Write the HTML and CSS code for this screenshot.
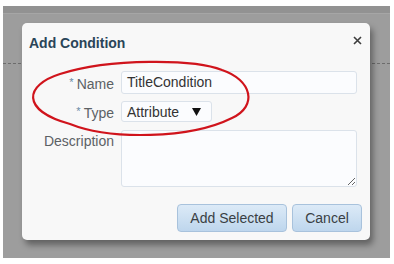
FILE: index.html
```html
<!DOCTYPE html>
<html>
<head>
<meta charset="utf-8">
<link rel="stylesheet" href="styles.css">
</head>
<body>
<div class="page">
  <div class="backdrop">
    <div class="topbar"></div>
    <div class="content"><div class="dashline"></div></div>
    <div class="dialog">
      <div class="dlg-header">
        <div class="dlg-title">Add Condition</div>
        <svg class="close" width="9" height="9" viewBox="0 0 9 9"><path d="M1 1 L8 8 M8 1 L1 8" stroke="#3d3d3d" stroke-width="1.6" fill="none"/></svg>
      </div>
      <div class="form">
        <label class="lbl"><span class="req">*</span>Name</label>
        <div class="input">TitleCondition</div>
        <label class="lbl"><span class="req">*</span>Type</label>
        <div class="select-row">
          <div class="select"><span>Attribute</span><svg width="9" height="8" viewBox="0 0 9 8"><path d="M0 0 H9 L4.5 8 Z" fill="#111"/></svg></div>
        </div>
        <label class="lbl lbl-top">Description</label>
        <textarea class="textarea"></textarea>
      </div>
      <div class="actions">
        <button class="btn btn-add">Add Selected</button>
        <button class="btn btn-cancel">Cancel</button>
      </div>
    </div>
  </div>
  <svg class="annot" width="394" height="264" viewBox="0 0 394 264">
    <path d="M222 70 C195 59, 110 58, 60 74 C25 85, 20 110, 70 124 C110 140, 190 139, 232 118 C258 106, 252 80, 222 70 Z" fill="none" stroke="#d0141c" stroke-width="2.2" stroke-linejoin="round"/>
  </svg>
</div>
</body>
</html>
```
FILE: styles.css
```css
html, body {
  margin: 0;
  padding: 0;
  background: #ffffff;
}
.page {
  position: relative;
  width: 394px;
  height: 264px;
  overflow: hidden;
  font-family: "Liberation Sans", Arial, sans-serif;
}
.backdrop {
  position: relative;
  margin: 6px 4px 0 3px;
  height: 252px;
  background: #9d9d9d;
}
.topbar {
  height: 7px;
  background: #929292;
  border-bottom: 1px solid #a6a6a6;
}
.content {
  padding-top: 49px;
}
.dashline {
  border-top: 1px dashed #6c6c6c;
}
.dialog {
  position: absolute;
  left: 19px;
  top: 17px;
  width: 348px;
  height: 217px;
  background: #f8f8f8;
  border-radius: 5px;
  box-shadow: 3px 5px 6px rgba(0, 0, 0, 0.38);
  box-sizing: border-box;
}
.dlg-header {
  display: flex;
  justify-content: space-between;
  align-items: flex-start;
  padding: 11px 8px 0 7px;
}
.dlg-title {
  font-size: 14px;
  font-weight: bold;
  line-height: 18px;
  color: #2a4558;
}
.close {
  margin-top: 2px;
}
.form {
  display: grid;
  grid-template-columns: 92px 236px;
  column-gap: 7px;
  row-gap: 7px;
  margin-top: 19px;
}
.lbl {
  justify-self: end;
  align-self: center;
  font-size: 14px;
  color: #5c6165;
  line-height: 16px;
}
.lbl-top {
  align-self: start;
  padding-top: 4px;
}
.req {
  font-size: 11px;
  color: #6a8aa6;
  vertical-align: 3px;
  margin-right: 3px;
}
.input {
  height: 23px;
  box-sizing: border-box;
  border: 1px solid #dbe2ea;
  border-radius: 3px;
  background: #fbfcfe;
  padding-left: 5px;
  font-size: 14px;
  line-height: 21px;
  color: #333;
}
.select-row {
  display: flex;
}
.select {
  display: flex;
  align-items: center;
  justify-content: space-between;
  width: 91px;
  height: 21px;
  box-sizing: border-box;
  border: 1px solid #dbe2ea;
  border-radius: 3px;
  background: #fbfcfe;
  padding: 0 10px 0 5px;
  font-size: 14px;
  color: #333;
}
.textarea {
  margin: 1px 0 0 0;
  width: 236px;
  height: 57px;
  box-sizing: border-box;
  border: 1px solid #dbe2ea;
  border-radius: 3px;
  background: #fbfcfe;
  resize: both;
  font-family: "Liberation Sans", Arial, sans-serif;
}
.actions {
  display: flex;
  justify-content: flex-end;
  gap: 5px;
  padding-right: 8px;
  margin-top: 17px;
}
.btn {
  height: 28px;
  box-sizing: border-box;
  border: 1px solid #a8c2dc;
  border-radius: 4px;
  background: linear-gradient(#dceaf7, #bed6ed);
  font-family: "Liberation Sans", Arial, sans-serif;
  font-size: 14px;
  color: #3a3f44;
  padding: 0;
}
.btn-add {
  width: 110px;
}
.btn-cancel {
  width: 70px;
}
.annot {
  position: absolute;
  left: 0;
  top: 0;
  pointer-events: none;
}
```
